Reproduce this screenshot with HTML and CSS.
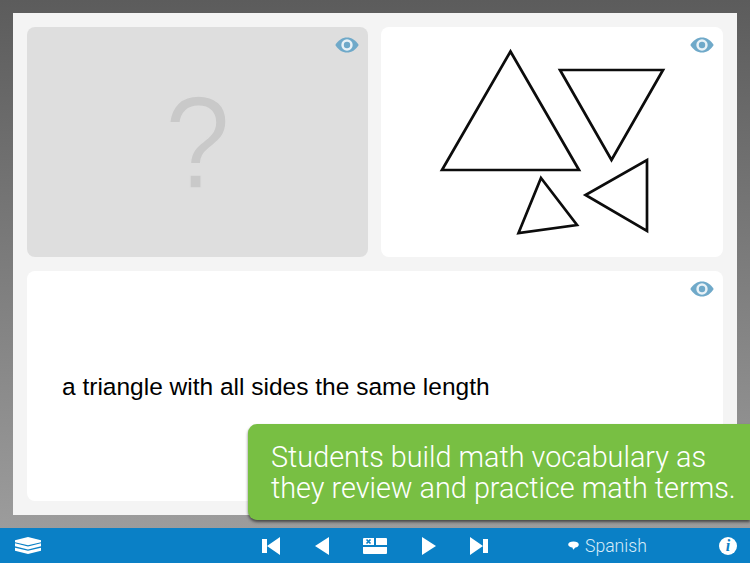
FILE: index.html
```html
<!DOCTYPE html>
<html lang="en">
<head>
<meta charset="utf-8">
<title>Math vocabulary</title>
<link rel="stylesheet" href="styles.css">
</head>
<body>
<svg class="defs" width="0" height="0" aria-hidden="true">
  <symbol id="eye" viewBox="0 0 24 16">
    <path d="M0.3 8C3.4 3 7.4 0.500 12 0.500S20.600 3 23.700 8C20.600 13 16.600 15.500 12 15.500S3.400 13 0.300 8Z" fill="#6fa9c9"/>
    <circle cx="12" cy="8" r="5.700" fill="#e9f2f7"/>
    <circle cx="12" cy="8" r="3.200" fill="#6fa9c9"/>
  </symbol>
</svg>
<main class="stage">
  <div class="panel">
    <div class="top-row">
      <section class="card card-hidden">
        <svg class="eye"><use href="#eye"/></svg>
        <span class="question">?</span>
      </section>
      <section class="card card-figure">
        <svg class="eye"><use href="#eye"/></svg>
        <svg class="triangles" width="342" height="230" viewBox="381 27 342 230">
          <g fill="none" stroke="#0c0c0c" stroke-width="2.700" stroke-linejoin="miter">
            <polygon points="510.500,51.500 442,170 579,170"/>
            <polygon points="560,70 663,70 611.500,160"/>
            <polygon points="647,160 647,231 585.500,195"/>
            <polygon points="541,178 577,225 518.500,233"/>
          </g>
        </svg>
      </section>
    </div>
    <section class="card card-definition">
      <svg class="eye"><use href="#eye"/></svg>
      <p class="definition">a triangle with all sides the same length</p>
    </section>
  </div>
</main>
<aside class="callout">
  <p>Students build math vocabulary as<br>they review and practice math terms.</p>
</aside>
<nav class="toolbar">
  <svg class="tool-stack" width="26" height="17" viewBox="0 0 26 17">
    <path d="M13 0L26 3.200V5.300L13 8.300L0 5.300V3.200Z" fill="#fff"/>
    <path d="M0 6.300L13 9.500L26 6.300V9.300L13 12.500L0 9.300Z" fill="#fff"/>
    <path d="M0 10.700L13 13.800L26 10.700V13.800L13 17L0 13.800Z" fill="#fff"/>
  </svg>
  <div class="nav-group">
    <svg width="18" height="18" viewBox="0 0 18 18"><path d="M0 2H5V16H0ZM18 0V18L5 9Z" fill="#fff"/></svg>
    <svg width="14" height="18" viewBox="0 0 14 18"><path d="M14 0V18L0 9Z" fill="#fff"/></svg>
    <svg width="24" height="16" viewBox="0 0 24 16">
      <path d="M0 1Q0 0 1 0H11V7H0ZM13 0H23Q24 0 24 1V7H13ZM0 9H24V15Q24 16 23 16H1Q0 16 0 15Z" fill="#fff"/>
      <path d="M3.500 1.500L7.500 5.500M7.500 1.500L3.500 5.500" stroke="#0a80c6" stroke-width="1.700"/>
    </svg>
    <svg width="14" height="18" viewBox="0 0 14 18"><path d="M0 0V18L14 9Z" fill="#fff"/></svg>
    <svg width="18" height="18" viewBox="0 0 18 18"><path d="M18 2H13V16H18ZM0 0V18L13 9Z" fill="#fff"/></svg>
  </div>
  <div class="language">
    <svg width="11" height="9" viewBox="0 0 11 9"><path d="M5.500 0.500C8.500 0.500 10.800 1.800 10.800 3.600S8.800 6.500 7.400 6.600L5.200 8.800L4.400 6.600C2.300 6.400 0.200 5.400 0.200 3.600S2.500 0.500 5.500 0.500Z" fill="#fff"/></svg>
    <span>Spanish</span>
  </div>
  <span class="info">i</span>
</nav>
</body>
</html>
```
FILE: styles.css
```css
* { box-sizing: border-box; }
html, body { height: 100%; }
body {
  margin: 0;
  width: 750px;
  height: 563px;
  overflow: hidden;
  position: relative;
  display: flex;
  flex-direction: column;
  font-family: "Liberation Sans", Arial, sans-serif;
  background: #0a80c6;
}
.defs { position: absolute; }
.stage {
  height: 528px;
  padding: 13px;
  background: linear-gradient(#5c5c5c, #9c9c9c);
}
.panel {
  height: 502px;
  padding: 14px;
  background: #f4f4f4;
  display: flex;
  flex-direction: column;
  gap: 14px;
}
.top-row {
  display: grid;
  grid-template-columns: 341px 342px;
  gap: 13px;
  height: 230px;
}
.card {
  position: relative;
  background: #fff;
  border-radius: 8px;
}
.card-hidden {
  background: #dedede;
  display: flex;
  align-items: center;
  justify-content: center;
}
.card-definition {
  height: 230px;
  display: flex;
  align-items: center;
  padding-left: 35px;
}
.eye {
  position: absolute;
  top: 10px;
  right: 9px;
  width: 24px;
  height: 16px;
}
.question {
  font-family: "Liberation Sans", sans-serif;
  font-size: 131px;
  line-height: 1;
  color: #c9c9c9;
  -webkit-text-stroke: 1.500px #dedede;
  transform: scaleX(0.9);
}
.triangles { display: block; }
.definition {
  margin: 0;
  font-size: 24.500px;
  color: #000;
  position: relative;
  top: 1px;
}
.callout {
  position: absolute;
  left: 248px;
  top: 424px;
  width: 502px;
  height: 96px;
  padding: 18px 0 0 23px;
  background: #78bf43;
  border-radius: 9px 0 0 9px;
  box-shadow: 0 2px 3px rgba(0, 0, 0, 0.55);
}
.callout p {
  margin: 0;
  font-family: Roboto, sans-serif;
  font-weight: 300;
  font-size: 28.800px;
  line-height: 31px;
  color: #fff;
  white-space: nowrap;
}
.toolbar {
  height: 35px;
  position: relative;
  display: flex;
  align-items: center;
  background: #0a80c6;
  color: #fff;
}
.tool-stack { margin-left: 15px; }
.nav-group {
  margin-left: 221px;
  display: flex;
  align-items: center;
  gap: 34.500px;
}
.language {
  margin-left: 80px;
  display: flex;
  align-items: center;
  gap: 6px;
  font-family: Roboto, sans-serif;
  font-weight: 300;
  font-size: 17.600px;
  color: #d8ecf8;
}
.info {
  margin-left: auto;
  margin-right: 13px;
  width: 18px;
  height: 18px;
  border-radius: 50%;
  background: #fff;
  color: #0a80c6;
  font-family: "Liberation Serif", serif;
  font-style: italic;
  font-weight: 700;
  font-size: 16px;
  line-height: 18px;
  text-align: center;
}
```
